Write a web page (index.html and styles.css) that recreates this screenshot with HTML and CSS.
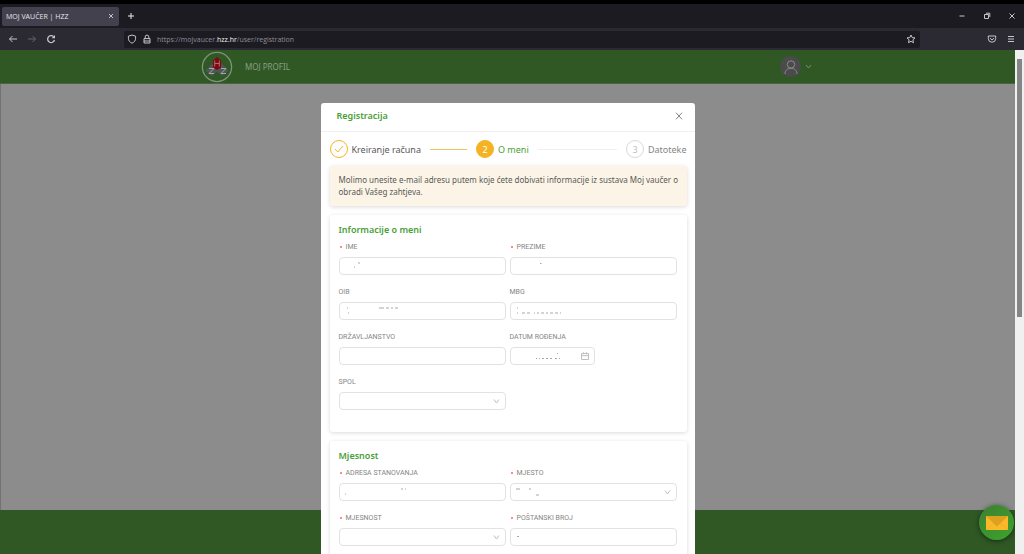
FILE: index.html
```html
<!DOCTYPE html>
<html lang="hr">
<head>
<meta charset="utf-8">
<title>MOJ VAUČER | HZZ</title>
<link rel="stylesheet" href="styles.css">
</head>
<body>
<div class="browser">
  <div class="tab-bar">
    <div class="tab"><span>MOJ VAUČER | HZZ</span>
      <button class="icon-button" aria-label="Zatvori karticu"><svg width="6" height="6" viewBox="0 0 6 6"><path d="M1 1l4 4M5 1L1 5"/></svg></button>
    </div>
    <button class="icon-button new-tab" aria-label="Nova kartica"><svg width="8" height="8" viewBox="0 0 8 8"><path d="M4 1v6M1 4h6"/></svg></button>
    <div class="window-controls">
      <button class="icon-button" aria-label="Minimiziraj"><svg width="8" height="8" viewBox="0 0 8 8"><path d="M1.500 4h5"/></svg></button>
      <button class="icon-button" aria-label="Vrati"><svg width="8" height="8" viewBox="0 0 8 8"><path d="M1.500 2.500h4v4h-4zM3 1.200h3.800V5"/></svg></button>
      <button class="icon-button" aria-label="Zatvori"><svg width="8" height="8" viewBox="0 0 8 8"><path d="M1.500 1.500l5 5M6.500 1.500l-5 5"/></svg></button>
    </div>
  </div>
  <div class="toolbar">
    <div class="nav-buttons">
      <button class="icon-button" aria-label="Natrag"><svg width="10" height="10" viewBox="0 0 10 10"><path d="M9 5H1.500M4.500 2l-3 3 3 3"/></svg></button>
      <button class="icon-button dim" aria-label="Naprijed"><svg width="10" height="10" viewBox="0 0 10 10"><path d="M1 5h7.500M5.500 2l3 3-3 3"/></svg></button>
      <button class="icon-button" aria-label="Osvježi"><svg width="10" height="10" viewBox="0 0 10 10" stroke-width="1.300"><path d="M8.500 6A3.500 3.500 0 1 1 7.600 2.600"/><path d="M9 1v3.300H5.700z" fill="currentColor" stroke="none"/></svg></button>
    </div>
    <div class="address">
      <svg width="10" height="10" viewBox="0 0 10 10"><path d="M5 1l3.600 1.200v2C8.600 6.500 7.300 8.200 5 9.200 2.700 8.200 1.400 6.500 1.400 4.200v-2z"/></svg>
      <svg width="10" height="10" viewBox="0 0 10 10"><path d="M2 4.600h6V9H2zM3.200 4.600V2.900a1.800 1.800 0 0 1 3.600 0v1.700M2 7h6"/></svg>
      <span class="url">https://mojvaucer.<b>hzz.hr</b>/user/registration</span>
      <button class="icon-button" aria-label="Označi stranicu"><svg width="10" height="10" viewBox="0 0 10 10"><path d="M5 1l1.200 2.600 2.800.3-2.100 1.900.6 2.900L5 7.300 2.500 8.700l.6-2.900L1 3.900l2.800-.3z"/></svg></button>
    </div>
    <div class="tool-buttons">
      <button class="icon-button" aria-label="Pocket"><svg width="10" height="10" viewBox="0 0 10 10"><path d="M1.300 2h7.400v2.500a3.700 3.700 0 0 1-7.400 0zM3 4.200L5 6l2-1.800"/></svg></button>
      <button class="icon-button" aria-label="Izbornik"><svg width="8" height="8" viewBox="0 0 8 8"><path d="M1 1.500h6M1 4h6M1 6.500h6"/></svg></button>
    </div>
  </div>

  <div class="viewport">
    <div class="page">
      <header class="site-header">
        <div class="site-nav">
          <svg class="logo" width="32" height="32" viewBox="0 0 32 32">
            <circle cx="16" cy="16" r="14.600" stroke="#80917c" stroke-width="1.300"/>
            <path d="M11 13l6 6.500-6 5.500-6.500-5.500zM21 13l6.500 6.500-6.500 5.500-6-5.500z" fill="#50575a" stroke="none"/>
            <path d="M16 6l4 3.500v7L16 19l-4-2.500v-7z" fill="#84070f" stroke="none"/>
            <path d="M13.700 9.500v6M18.300 9.500v6M13.700 12.500h4.600" stroke="#a67070"/>
            <path d="M8 17.500h5l-5 5h5M20 17.500h5l-5 5h5" stroke="#a4a9a2"/>
          </svg>
          <a href="#profil">MOJ PROFIL</a>
        </div>
        <button class="account" aria-label="Korisnički račun">
          <span class="avatar"><svg width="16" height="16" viewBox="0 0 16 16"><circle cx="8" cy="5.500" r="3.700"/><path d="M2 15c0-3.500 2.500-5.800 6-5.800s6 2.300 6 5.800"/></svg></span>
          <svg width="7" height="7" viewBox="0 0 7 7"><path d="M1 2l2.500 3L6 2"/></svg>
        </button>
      </header>
      <main class="backdrop"></main>
      <footer class="site-footer"></footer>

      <section class="modal" role="dialog" aria-labelledby="modal-title">
        <header class="modal-header">
          <h1 id="modal-title">Registracija</h1>
          <button class="close" aria-label="Zatvori"><svg width="8" height="8" viewBox="0 0 8 8"><path d="M1 .7l6 6.600M7 .7L1 7.300"/></svg></button>
        </header>
        <div class="modal-body">
          <ol class="steps">
            <li class="done"><span class="dot"><svg width="10" height="8" viewBox="0 0 10 8"><path d="M1 4l2.800 3L9 1"/></svg></span>Kreiranje računa</li>
            <li class="line line-done" aria-hidden="true"></li>
            <li class="current"><span class="dot">2</span>O meni</li>
            <li class="line" aria-hidden="true"></li>
            <li class="waiting"><span class="dot">3</span>Datoteke</li>
          </ol>
          <p class="notice">Molimo unesite e-mail adresu putem koje ćete dobivati informacije iz sustava Moj vaučer o obradi Vašeg zahtjeva.</p>

          <form class="card">
            <h2>Informacije o meni</h2>
            <div class="fields">
              <div class="field required"><label for="ime">IME</label>
                <div class="control"><input id="ime"><svg class="marks" width="120" height="16"><path d="M19 5h2M15 9h1"/></svg></div></div>
              <div class="field required"><label for="prezime">PREZIME</label>
                <div class="control"><input id="prezime"><svg class="marks" width="120" height="16"><path d="M30 5.500h1.500"/></svg></div></div>
              <div class="field"><label for="oib">OIB</label>
                <div class="control"><input id="oib"><svg class="marks" width="120" height="16"><path d="M8 5h1M9 10h1M40 5h5M47 5h3M52 5h2M56 5h3"/></svg></div></div>
              <div class="field"><label for="mbg">MBG</label>
                <div class="control"><input id="mbg"><svg class="marks" width="120" height="16"><path d="M7 5h1M7 10h1M12 10h3M17 10h3M24 10h1M27 10h2M31 10h3M36 10h2M40 10h3M45 10h3M50 10h1"/></svg></div></div>
              <div class="field"><label for="drzavljanstvo">DRŽAVLJANSTVO</label>
                <div class="control"><input id="drzavljanstvo"></div></div>
              <div class="field"><label for="datum">DATUM ROĐENJA</label>
                <div class="control date"><input id="datum"><svg class="marks" width="70" height="16"><path d="M26 10.500h1M29 10.500h1M32 10.500h2M36 10.500h2M40 10.500h2M45 10.500h2M49 10.500h1M47 5.500h1"/></svg>
                  <svg class="suffix" width="8" height="8" viewBox="0 0 8 8"><path d="M.5 1.500h7v6h-7zM.5 3.700h7M2.500.3v2M5.500.3v2"/></svg></div></div>
              <div class="field"><label for="spol">SPOL</label>
                <div class="control"><select id="spol"><option></option></select>
                  <svg class="suffix" width="7" height="7" viewBox="0 0 7 7"><path d="M1 1.500l2.500 3.500L6 1.500"/></svg></div></div>
            </div>
          </form>

          <form class="card">
            <h2>Mjesnost</h2>
            <div class="fields">
              <div class="field required"><label for="adresa">ADRESA STANOVANJA</label>
                <div class="control"><input id="adresa"><svg class="marks" width="120" height="16"><path d="M6 10h1M62 5h2M66 5h1"/></svg></div></div>
              <div class="field required"><label for="mjesto">MJESTO</label>
                <div class="control"><select id="mjesto"><option></option></select><svg class="marks" width="120" height="16"><path d="M6 5h4M19 5h2M26 11h3"/></svg>
                  <svg class="suffix" width="7" height="7" viewBox="0 0 7 7"><path d="M1 1.500l2.500 3.500L6 1.500"/></svg></div></div>
              <div class="field required"><label for="mjesnost">MJESNOST</label>
                <div class="control"><select id="mjesnost"><option></option></select>
                  <svg class="suffix" width="7" height="7" viewBox="0 0 7 7"><path d="M1 1.500l2.500 3.500L6 1.500"/></svg></div></div>
              <div class="field required"><label for="posta">POŠTANSKI BROJ</label>
                <div class="control"><input id="posta"><svg class="marks" width="120" height="16"><path d="M7 7.500h2"/></svg></div></div>
            </div>
          </form>
        </div>
      </section>

      <button class="contact" aria-label="Pošalji poruku"><svg width="22" height="14" viewBox="0 0 22 14"><path d="M0 0h22v14H0z" fill="#fbb829"/><path d="M0 0h22L11 10.500z" fill="#dda01f"/><path d="M0 14l8-6.500M22 14l-8-6.500" stroke="#e9ac29" stroke-width=".7"/></svg></button>
    </div>
    <div class="scrollbar"><div class="thumb"></div></div>
  </div>
</div>
</body>
</html>
```

FILE: styles.css
```css
* { box-sizing: border-box; }
body { margin: 0; font-family: "Noto Sans", "Open Sans", sans-serif; }
button { padding: 0; border: 0; background: none; font: inherit; }
svg { display: block; flex: none; fill: none; stroke: currentColor; }
h1, h2, p, ol { margin: 0; padding: 0; }

.browser { display: flex; flex-direction: column; height: 100vh; overflow: hidden; border-top: 4px solid #000; }
.icon-button { display: flex; color: #c5c5ca; }
.dim { color: #65646d; }

.tab-bar { display: flex; align-items: center; height: 24px; padding: 0 4px 0 2px; background: #1c1b22; }
.tab { display: flex; align-items: center; justify-content: space-between; width: 117px; height: 19px; padding: 0 5px 0 4px; border-radius: 2px; background: #42414d; color: #e6e6ea; font: 7px "Open Sans", sans-serif; }
.new-tab { margin-left: 8px; color: #ededf0; }
.window-controls { display: flex; gap: 17px; margin-left: auto; padding-right: 4px; }

.toolbar { display: flex; align-items: center; height: 22px; padding: 0 8px; background: #2b2a33; }
.nav-buttons { display: flex; gap: 9px; width: 116px; }
.address { display: flex; flex: 1; align-items: center; gap: 5px; height: 17px; padding: 0 4px 0 3px; border-radius: 2px; background: #1c1b22; color: #c5c5ca; }
.url { flex: 1; color: #8f8f98; font: 7px "Open Sans", sans-serif; }
.url b { color: #f2f2f5; font-weight: 400; }
.tool-buttons { display: flex; align-items: center; justify-content: flex-end; gap: 10px; width: 96px; padding-right: 1px; }

.viewport { display: flex; flex: 1; min-height: 0; }
.page { position: relative; display: flex; flex: 1; flex-direction: column; min-width: 0; overflow: hidden; }
.site-header { display: flex; align-items: center; justify-content: space-between; height: 34px; padding: 0 20%; border-bottom: 1px solid #496540; background: #2f5825; }
.site-nav { display: flex; align-items: center; gap: 12px; margin-left: -2px; }
.site-nav a { color: #8b9f85; font: 8px "Noto Sans", sans-serif; text-decoration: none; }
.account { display: flex; align-items: center; gap: 4px; color: #79916f; }
.avatar { display: flex; align-items: center; justify-content: center; width: 21px; height: 21px; border-radius: 50%; background: #4b4b4b; color: #8c8c8c; }
.backdrop { flex: 1; border-left: 1px solid #737373; background: #8c8c8c; }
.site-footer { height: 44px; background: #2f5825; }
.scrollbar { width: 9px; padding: 9px 2px; background: #f0f0f0; }
.thumb { height: 53%; background: #858585; }

.modal { position: absolute; top: 53px; left: 50%; width: 374px; margin-left: -187px; border-radius: 3px 3px 0 0; background: #fff; }
.modal-header { display: flex; align-items: center; justify-content: space-between; height: 29px; padding: 0 12px 2px 16px; border-bottom: 1px solid #f0f0f0; }
.modal-header h1 { color: #4aa037; font-size: 9px; font-weight: 600; line-height: 12px; }
.close { display: flex; color: #858585; }
.modal-body { padding: 4px 8px 0 9px; }

.steps { display: flex; align-items: center; height: 26px; list-style: none; font-size: 9px; }
.steps li { display: flex; align-items: center; gap: 4px; color: #858585; }
.steps .done { color: #595959; }
.steps .current { color: #4aa037; }
.steps .line { flex: 1; height: 1px; margin: 0 9px; background: #f0f0f0; }
.steps .line-done { flex: 0 1 37px; background: #f3c35b; }
.dot { display: flex; align-items: center; justify-content: center; width: 18px; height: 18px; border: 1px solid #d9d9d9; border-radius: 50%; color: #bfbfbf; }
.done .dot { border-color: #f5b324; color: #f5b324; }
.current .dot { border-color: #f5b324; background: #f5b324; color: #fff; }

.notice { margin-top: 4px; padding: 8px 6px 8px 9px; border-radius: 3px; background: #fcf5e7; box-shadow: 0 1px 4px #00000026; color: #595959; font-size: 8px; line-height: 12px; }
.card { margin-top: 9px; padding: 9px 10px 22px 9px; border-radius: 3px; background: #fff; box-shadow: 0 1px 4px #00000026; }
.card h2 { margin-bottom: 6px; color: #4aa037; font-size: 9px; font-weight: 600; line-height: 12px; }
.fields { display: grid; grid-template-columns: 1fr 1fr; gap: 12px 4px; }
.field { display: flex; flex-direction: column; gap: 5px; }
.field label { display: flex; align-items: center; gap: 4px; color: #858585; font: 7px/10px Roboto, sans-serif; }
.required label::before { content: ""; width: 2px; height: 2px; margin-left: 1px; border-radius: 1px; background: #ff6266; }
.control { position: relative; display: flex; align-items: center; }
.control input, .control select { width: 100%; height: 18px; padding: 0 6px; border: 1px solid #e2e2e2; border-radius: 4px; background: #fff; color: #595959; font: 8px "Noto Sans", sans-serif; appearance: none; }
.date { width: 85px; }
.marks { position: absolute; top: 1px; left: 0; color: #a8a8a8; pointer-events: none; }
.suffix { position: absolute; right: 6px; color: #bfbfbf; pointer-events: none; }

.contact { position: absolute; right: 1px; bottom: 14px; display: flex; align-items: center; justify-content: center; width: 35px; height: 35px; border-radius: 50%; background: linear-gradient(140deg, #3e7f31, #3ca42d); box-shadow: 0 1px 5px #0008; }
.contact svg { stroke: none; }
```
